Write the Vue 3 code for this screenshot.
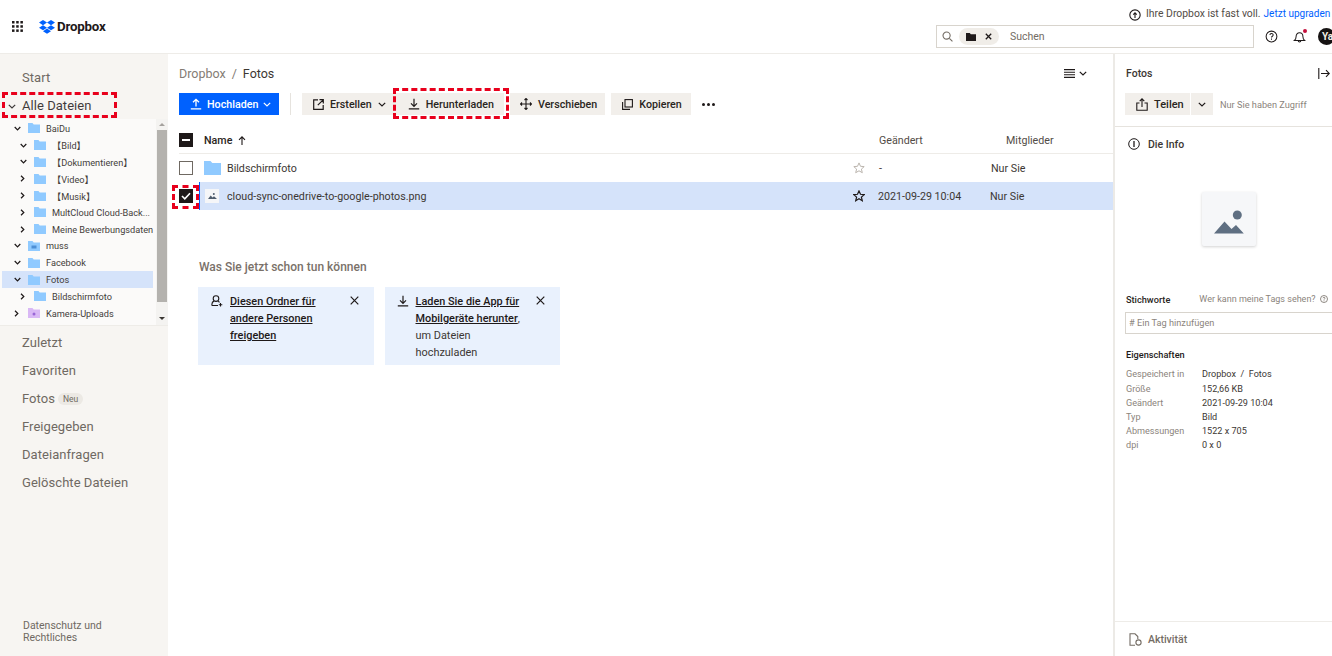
<script setup>
const tree = [
  { name: '【Bild】', depth: 1, open: true },
  { name: '【Dokumentieren】', depth: 1, open: true },
  { name: '【Video】', depth: 1, open: false },
  { name: '【Musik】', depth: 1, open: false },
  { name: 'MultCloud Cloud-Back...', depth: 1, open: false },
  { name: 'Meine Bewerbungsdaten', depth: 1, open: false },
  { name: 'muss', depth: 0, open: true, shared: true },
  { name: 'Facebook', depth: 0, open: true },
  { name: 'Fotos', depth: 0, open: true, active: true },
  { name: 'Bildschirmfoto', depth: 1, open: false },
  { name: 'Kamera-Uploads', depth: 0, open: false, camera: true },
  { name: '', depth: 0, open: false },
]
const nav = ['Zuletzt', 'Favoriten', 'Fotos', 'Freigegeben', 'Dateianfragen', 'Gelöschte Dateien']
const props = [
  ['Größe', '152,66 KB'],
  ['Geändert', '2021-09-29 10:04'],
  ['Typ', 'Bild'],
  ['Abmessungen', '1522 x 705'],
  ['dpi', '0 x 0'],
]
</script>

<template>
  <div class="app">
    <header class="top">
      <div class="brand">
        <svg class="grid" width="11" height="11" viewBox="0 0 11 11" fill="#1e1919">
          <template v-for="y in [0, 4.2, 8.4]" :key="y">
            <rect v-for="x in [0, 4.2, 8.4]" :key="x" :x="x" :y="y" width="2.5" height="2.5" />
          </template>
        </svg>
        <svg class="logo" width="16" height="14" viewBox="0 0 32 28" fill="#0061fe">
          <path d="M8 0 0 5.2l8 5.1 8-5.1zM24 0l-8 5.2 8 5.1 8-5.1zM0 15.5l8 5.1 8-5.1-8-5.2zM24 10.3l-8 5.2 8 5.1 8-5.1zM8 22.3l8 5.2 8-5.2-8-5.1z" />
        </svg>
        <span class="wordmark">Dropbox</span>
      </div>
      <div class="top-right">
        <div class="notice">
          <svg width="12" height="12" viewBox="0 0 13 13" fill="none" stroke="#1e1919" stroke-width="1.2">
            <circle cx="6.5" cy="6.5" r="5.6" />
            <path d="M6.5 9.7V4.2M4.6 6l1.9-1.9L8.4 6" />
          </svg>
          <span class="notice-text">Ihre Dropbox ist fast voll.</span>
          <span class="upgrade">Jetzt upgraden</span>
        </div>
        <div class="tools">
          <div class="search">
            <svg width="11" height="11" viewBox="0 0 12 12" fill="none" stroke="#736c64" stroke-width="1.2">
              <circle cx="5" cy="5" r="3.9" />
              <path d="m8 8 3.4 3.4" />
            </svg>
            <div class="chip">
              <svg width="10" height="8" viewBox="0 0 10 8" fill="#1e1919">
                <path d="M0 0h3.8l1 1.2H10V8H0z" />
              </svg>
              <svg width="7" height="7" viewBox="0 0 7 7" stroke="#1e1919" stroke-width="1.3">
                <path d="m.8.8 5.4 5.4M6.2.8.8 6.2" />
              </svg>
            </div>
            <span class="placeholder">Suchen</span>
          </div>
          <svg class="tool" width="13" height="13" viewBox="0 0 14 14" fill="none" stroke="#1e1919" stroke-width="1.1">
            <circle cx="7" cy="7" r="5.8" />
            <path d="M5.3 5.5c0-2.2 3.5-2.2 3.5-.1 0 1.4-1.8 1.3-1.8 2.8M7 9.2v1.2" />
          </svg>
          <span class="bell">
            <svg width="13" height="14" viewBox="0 0 14 14" fill="none" stroke="#1e1919" stroke-width="1.1">
              <path d="M1.5 10.8c1.3-1 1.8-2 1.8-4 0-2.600 1.500-4.300 3.700-4.300s3.700 1.700 3.700 4.300c0 2 .5 3 1.800 4zM5.600 11c0 1.800 2.800 1.800 2.800 0" />
            </svg>
            <i class="dot"></i>
          </span>
          <span class="avatar">Ya</span>
        </div>
      </div>
    </header>

    <div class="body">
      <aside class="side">
        <div class="nav-item start">Start</div>
        <div class="nav-item all">
          <svg class="all-chev" width="8" height="5" viewBox="0 0 8 5" fill="none" stroke="#1e1919" stroke-width="1.2">
            <path d="m.8.8 3.2 3.2L7.200.8" />
          </svg>
          Alle Dateien
        </div>
        <div class="tree">
          <div class="tree-list">
            <div class="tree-row d0">
              <svg class="chev" width="7" height="5" viewBox="0 0 8 5" fill="none" stroke="#1e1919" stroke-width="1.4">
                <path d="m.8.8 3.2 3.2L7.200.8" />
              </svg>
              <svg class="folder" width="12" height="10" viewBox="0 0 12 10" fill="#90caff">
                <path d="M0 0h4.500l1.200 1.400H12V10H0z" />
              </svg>
              <span>BaiDu</span>
            </div>
            <div
              v-for="row in tree"
              :key="row.name"
              class="tree-row"
              :class="[row.depth ? 'd1' : 'd0', { active: row.active }]"
            >
              <svg v-if="row.open" class="chev" width="7" height="5" viewBox="0 0 8 5" fill="none" stroke="#1e1919" stroke-width="1.4">
                <path d="m.8.8 3.2 3.2L7.200.8" />
              </svg>
              <svg v-else class="chev" width="5" height="7" viewBox="0 0 5 8" fill="none" stroke="#1e1919" stroke-width="1.4">
                <path d="m.8.8 3.200 3.200L.8 7.200" />
              </svg>
              <svg class="folder" width="12" height="10" viewBox="0 0 12 10" :fill="row.camera ? '#d9b8f5' : '#90caff'">
                <path d="M0 0h4.500l1.200 1.400H12V10H0z" />
                <rect v-if="row.shared" x="3.500" y="4.500" width="5" height="3" fill="#4d8fd6" />
                <circle v-if="row.camera" cx="6" cy="6" r="1.500" fill="#9a66d6" />
              </svg>
              <span>{{ row.name }}</span>
            </div>
          </div>
          <div class="scroll">
            <i class="arrow up"></i>
            <div class="thumb"></div>
            <i class="arrow down"></i>
          </div>
        </div>
        <nav class="nav">
          <div v-for="n in nav" :key="n" class="nav-item">
            {{ n }}<span v-if="n === 'Fotos'" class="new">Neu</span>
          </div>
        </nav>
        <div class="legal">Datenschutz und<br />Rechtliches</div>
      </aside>

      <main class="main">
        <div class="crumb-row">
          <div class="crumb"><span class="muted">Dropbox</span><span class="muted sl">/</span><span>Fotos</span></div>
          <div class="view">
            <svg width="11" height="9" viewBox="0 0 11 9" stroke="#1e1919" stroke-width="1.1">
              <path d="M0 .6h11M0 3.200h11M0 5.800h11M0 8.400h11" />
            </svg>
            <svg width="8" height="5" viewBox="0 0 8 5" fill="none" stroke="#1e1919" stroke-width="1.2">
              <path d="m.8.8 3.200 3.200L7.200.8" />
            </svg>
          </div>
        </div>

        <div class="actions">
          <button class="btn primary">
            <svg width="12" height="12" viewBox="0 0 12 12" fill="none" stroke="#fff" stroke-width="1.300">
              <path d="M6 8.500V1.500M3 4.300l3-3 3 3M.8 10.800h10.400" />
            </svg>
            Hochladen
            <svg width="8" height="5" viewBox="0 0 8 5" fill="none" stroke="#fff" stroke-width="1.200">
              <path d="m.8.8 3.200 3.200L7.200.8" />
            </svg>
          </button>
          <span class="vr"></span>
          <div class="joined">
            <button class="btn">
              <svg width="11" height="11" viewBox="0 0 11 11" fill="none" stroke="#1e1919" stroke-width="1.200">
                <path d="M5 .8H.7v9.500h9.500V6M6.500.7h3.800v3.800M10.200.8 4.800 6.200" />
              </svg>
              Erstellen
              <svg width="8" height="5" viewBox="0 0 8 5" fill="none" stroke="#1e1919" stroke-width="1.200">
                <path d="m.8.8 3.200 3.200L7.200.8" />
              </svg>
            </button>
            <button class="btn download">
              <svg width="12" height="12" viewBox="0 0 12 12" fill="none" stroke="#1e1919" stroke-width="1.200">
                <path d="M6 .8v7.400M3 5.300l3 3 3-3M.8 10.800h10.400" />
              </svg>
              Herunterladen
            </button>
          </div>
          <button class="btn move">
            <svg width="12" height="12" viewBox="0 0 12 12" fill="none" stroke="#1e1919" stroke-width="1.100">
              <path d="M6 .5v11M.5 6h11M4.500 2 6 .5 7.500 2M4.500 10 6 11.500 7.500 10M2 4.500.5 6 2 7.500M10 4.500 11.500 6 10 7.500" />
            </svg>
            Verschieben
          </button>
          <button class="btn copy">
            <svg width="11" height="11" viewBox="0 0 11 11" fill="none" stroke="#1e1919" stroke-width="1.100">
              <rect x="3" y=".6" width="7.400" height="7.400" />
              <path d="M.6 3v7.400H8" />
            </svg>
            Kopieren
          </button>
          <span class="more"><i></i><i></i><i></i></span>
        </div>

        <div class="thead">
          <span class="box indet"><i></i></span>
          <span class="th-name">Name
            <svg width="8" height="9" viewBox="0 0 8 9" fill="none" stroke="#1e1919" stroke-width="1.100">
              <path d="M4 9V1M1 3.800l3-3 3 3" />
            </svg>
          </span>
          <span class="th-mod">Geändert</span>
          <span class="th-mem">Mitglieder</span>
        </div>

        <div class="row">
          <span class="box"></span>
          <svg class="row-folder" width="17" height="14" viewBox="0 0 17 14" fill="#90caff">
            <path d="M0 0h6.500l1.800 2H17v12H0z" />
          </svg>
          <span class="fname">Bildschirmfoto</span>
          <svg class="star" width="12" height="12" viewBox="0 0 12 12" fill="none" stroke="#bbb5ae" stroke-width="1">
            <path d="m6 .9 1.500 3.400 3.700.3-2.800 2.500.9 3.600L6 8.800l-3.300 1.900.9-3.600L.8 4.600l3.700-.3z" />
          </svg>
          <span class="mod">-</span>
          <span class="mem">Nur Sie</span>
        </div>
        <div class="row selected">
          <span class="box checked">
            <svg width="10" height="8" viewBox="0 0 10 8" fill="none" stroke="#fff" stroke-width="1.600">
              <path d="m1 4 2.800 2.800L9 1.200" />
            </svg>
          </span>
          <span class="thumb-file">
            <svg width="9" height="6" viewBox="0 0 9 6" fill="#4f5d6e">
              <circle cx="5.800" cy="1" r="1" />
              <path d="M0 6 2.700 2.500 4.500 4.500 6 3.300 9 6z" />
            </svg>
          </span>
          <span class="fname">cloud-sync-onedrive-to-google-photos.png</span>
          <svg class="star" width="12" height="12" viewBox="0 0 12 12" fill="none" stroke="#1e1919" stroke-width="1.200">
            <path d="m6 .9 1.500 3.400 3.700.3-2.800 2.500.9 3.600L6 8.800l-3.300 1.900.9-3.600L.8 4.600l3.700-.3z" />
          </svg>
          <span class="mod">2021-09-29 10:04</span>
          <span class="mem">Nur Sie</span>
        </div>

        <section class="tips">
          <h2>Was Sie jetzt schon tun können</h2>
          <div class="cards">
            <div class="card">
              <svg width="12" height="12" viewBox="0 0 12 12" fill="none" stroke="#1e1919" stroke-width="1.100">
                <circle cx="5" cy="3.600" r="2.800" />
                <path d="M1 10.600c-.4-2.800 1-4.200 2-4.500M7 6.100c.8.300 1.200.8 1.400 1.400M1 10.500h6M9.500 8v3.500M7.800 9.800h3.500" />
              </svg>
              <div class="card-text"><u>Diesen Ordner für andere Personen freigeben</u></div>
              <svg class="x" width="9" height="9" viewBox="0 0 9 9" stroke="#1e1919" stroke-width="1.200">
                <path d="m.7.7 7.600 7.600M8.300.7.700 8.300" />
              </svg>
            </div>
            <div class="card">
              <svg width="12" height="12" viewBox="0 0 12 12" fill="none" stroke="#1e1919" stroke-width="1.200">
                <path d="M6 .8v7.400M3 5.300l3 3 3-3M.8 10.800h10.400" />
              </svg>
              <div class="card-text"><u>Laden Sie die App für Mobilgeräte herunter</u>, um Dateien hochzuladen</div>
              <svg class="x" width="9" height="9" viewBox="0 0 9 9" stroke="#1e1919" stroke-width="1.200">
                <path d="m.7.7 7.600 7.600M8.300.7.700 8.300" />
              </svg>
            </div>
          </div>
        </section>
      </main>

      <aside class="panel">
        <div class="p-head">
          <span>Fotos</span>
          <svg width="12" height="11" viewBox="0 0 12 11" fill="none" stroke="#1e1919" stroke-width="1.100">
            <path d="M.8 0v11M3 5.500h8.300M8 2.200l3.300 3.300L8 8.800" />
          </svg>
        </div>
        <div class="share">
          <button class="btn share-btn">
            <svg width="12" height="13" viewBox="0 0 12 13" fill="none" stroke="#1e1919" stroke-width="1.100">
              <path d="M3.500 5H.8v7.300h10.400V5H8.500M6 9V1M3.700 3.200 6 .9l2.300 2.300" />
            </svg>
            Teilen
          </button>
          <button class="btn share-chev">
            <svg width="8" height="5" viewBox="0 0 8 5" fill="none" stroke="#1e1919" stroke-width="1.200">
              <path d="m.8.8 3.200 3.200L7.200.8" />
            </svg>
          </button>
          <span class="access">Nur Sie haben Zugriff</span>
        </div>
        <div class="info">
          <div class="info-title">
            <svg width="12" height="12" viewBox="0 0 12 12" fill="none" stroke="#1e1919" stroke-width="1">
              <circle cx="6" cy="6" r="5.300" />
              <path d="M6 3v6" stroke-width="1.300" />
            </svg>
            Die Info
          </div>
          <div class="preview">
            <svg width="30" height="24" viewBox="0 0 30 24" fill="#5f6f82">
              <circle cx="23.300" cy="5" r="4.500" />
              <path d="M0 23.500 10.500 11.500l7 7.500 4.500-4 7.800 8.500z" />
            </svg>
          </div>
          <div class="tags-head">
            <b>Stichworte</b>
            <span class="who">Wer kann meine Tags sehen?
              <svg width="8" height="8" viewBox="0 0 8 8" fill="none" stroke="#736c64" stroke-width=".8">
                <circle cx="4" cy="4" r="3.500" />
                <path d="M3 3.200c0-1.200 2-1.200 2 0 0 .7-1 .7-1 1.500M4 5.400v.8" />
              </svg>
            </span>
          </div>
          <div class="tag-input"># Ein Tag hinzufügen</div>
          <div class="props-title">Eigenschaften</div>
          <div class="prop first">
            <span class="k">Gespeichert in</span>
            <span class="v">Dropbox&nbsp;&nbsp;/&nbsp;&nbsp;Fotos</span>
          </div>
          <div v-for="p in props" :key="p[0]" class="prop">
            <span class="k">{{ p[0] }}</span>
            <span class="v">{{ p[1] }}</span>
          </div>
        </div>
        <div class="activity">
          <svg width="13" height="13" viewBox="0 0 13 13" fill="none" stroke="#736c64" stroke-width="1.100">
            <path d="M6 12.300H1V.8h5l2.800 2.800V6" />
            <circle cx="9.500" cy="9.500" r="2.600" />
          </svg>
          Aktivität
        </div>
      </aside>
    </div>

    <i class="mark m-all"></i>
    <i class="mark m-down"></i>
    <i class="mark m-check"></i>
  </div>
</template>

<style scoped>
.app {
  position: relative;
  width: 1332px;
  height: 656px;
  overflow: hidden;
  background: #fff;
  display: flex;
  flex-direction: column;
  font-family: Roboto, "Liberation Sans", "Noto Sans CJK SC", sans-serif;
  color: #1e1919;
  font-size: 11px;
}
.top {
  height: 54px;
  flex: none;
  box-sizing: border-box;
  border-bottom: 1px solid #eeece8;
  display: flex;
  justify-content: space-between;
}
.brand {
  display: flex;
  align-items: center;
  padding: 0 0 0 12px;
}
.logo {
  margin-left: 16px;
}
.wordmark {
  margin-left: 2px;
  font-size: 13.300px;
  font-weight: 700;
  letter-spacing: -0.2px;
}
.top-right {
  width: 396px;
  flex: none;
}
.notice {
  height: 26px;
  margin-bottom: -1px;
  padding-left: 193px;
  display: flex;
  align-items: center;
  font-size: 10.400px;
  color: #524c46;
  white-space: nowrap;
}
.notice svg {
  flex: none;
  margin-top: 3px;
}
.notice-text {
  margin-left: 5px;
}
.upgrade {
  margin-left: 3px;
  font-size: 10px;
  color: #0061fe;
}
.tools {
  display: flex;
  align-items: center;
}
.search {
  width: 318px;
  height: 23px;
  flex: none;
  box-sizing: border-box;
  border: 1px solid #d8d4cd;
  display: flex;
  align-items: center;
  padding-left: 5px;
}
.chip {
  margin-left: 6px;
  width: 40px;
  height: 17px;
  border-radius: 9px;
  background: #f0ede8;
  display: flex;
  align-items: center;
  gap: 9px;
  padding-left: 7px;
  box-sizing: border-box;
}
.placeholder {
  margin-left: 11px;
  color: #736c64;
  font-size: 10.500px;
}
.tool {
  flex: none;
  margin-left: 11px;
}
.bell {
  position: relative;
  flex: none;
  margin-left: 15px;
  display: flex;
}
.dot {
  position: absolute;
  right: -1px;
  top: -1px;
  width: 4px;
  height: 4px;
  border-radius: 50%;
  background: #c4103c;
}
.avatar {
  margin-left: 12px;
  width: 17px;
  height: 17px;
  flex: none;
  border-radius: 50%;
  background: #161313;
  color: #f5efe3;
  font-size: 10px;
  font-weight: 700;
  line-height: 17px;
  padding-left: 4px;
  box-sizing: border-box;
}
.body {
  flex: 1;
  min-height: 0;
  display: flex;
}
.side {
  width: 168px;
  flex: none;
  background: #f7f5f2;
  display: flex;
  flex-direction: column;
  padding-top: 10px;
  box-sizing: border-box;
}
.nav-item {
  height: 28px;
  line-height: 28px;
  padding-left: 22px;
  font-size: 13px;
  color: #6f6962;
  letter-spacing: 0.05px;
}
.all {
  position: relative;
  color: #1e1919;
  opacity: 0.85;
  height: 28px;
}
.all-chev {
  position: absolute;
  left: 8px;
  top: 12px;
}
.tree {
  height: 207px;
  margin-top: -1px;
  background: #fbfaf9;
  border-bottom: 1px solid #eeece8;
  display: flex;
  box-sizing: border-box;
  overflow: hidden;
}
.tree-list {
  width: 153px;
  margin-right: 3px;
  flex: none;
  padding: 1px 0 0 2px;
  box-sizing: border-box;
  overflow: hidden;
}
.tree-row {
  height: 16.800px;
  display: flex;
  align-items: center;
  font-size: 9.200px;
  color: #44403b;
  white-space: nowrap;
  position: relative;
}
.tree-row.active {
  background: #d5e3fa;
}
.tree-row.d0 {
  padding-left: 26px;
}
.tree-row.d1 {
  padding-left: 32px;
}
.chev {
  position: absolute;
  left: 12px;
}
.d1 .chev {
  left: 18px;
}
.folder {
  flex: none;
  margin-right: 6px;
}
.scroll {
  width: 12px;
  position: relative;
  background: #f4f3f1;
  flex: none;
}
.thumb {
  position: absolute;
  left: 1px;
  right: 1px;
  top: 11px;
  bottom: 23px;
  background: #b4b2ae;
}
.arrow {
  position: absolute;
  left: 3px;
  width: 0;
  height: 0;
  border-left: 3px solid transparent;
  border-right: 3px solid transparent;
}
.up {
  top: 4px;
  border-bottom: 3px solid #a5a29e;
}
.down {
  bottom: 5px;
  border-top: 3px solid #3a3733;
}
.nav {
  margin-top: 3px;
}
.new {
  display: inline-block;
  margin-left: 3px;
  padding: 0 5px;
  height: 12px;
  line-height: 12px;
  border-radius: 6px;
  background: #ece9e4;
  font-size: 8.500px;
  letter-spacing: 0;
  vertical-align: 1px;
}
.legal {
  margin-top: auto;
  padding: 0 0 12px 23px;
  color: #6f6962;
  font-size: 10.500px;
  line-height: 12px;
}
.main {
  width: 945px;
  flex: none;
  padding-top: 10px;
  box-sizing: border-box;
}
.crumb-row {
  height: 18px;
  display: flex;
  justify-content: space-between;
  align-items: center;
  padding: 0 26px 0 11px;
  font-size: 12.500px;
}
.crumb {
  color: #3c3733;
}
.muted {
  color: #847c74;
}
.sl {
  margin: 0 6px;
}
.view {
  display: flex;
  align-items: center;
  gap: 4px;
}
.actions {
  margin-top: 11px;
  padding-left: 11px;
  display: flex;
  align-items: center;
  gap: 6px;
}
.joined {
  display: flex;
}
.btn {
  height: 22px;
  flex: none;
  border: 0;
  padding: 0 8px 0 11px;
  background: #f2efeb;
  font: 500 10.700px Roboto, "Liberation Sans", sans-serif;
  color: #2a2622;
  display: flex;
  align-items: center;
  gap: 6px;
}
.download {
  padding: 0 10px 0 14px;
}
.move {
  padding-left: 10px;
}
.copy {
  padding-right: 9px;
}
.primary {
  background: #0061fe;
  color: #fff;
  width: 100px;
  gap: 5px;
  padding: 0 6px 0 11px;
  margin-right: 5px;
}
.vr {
  width: 1px;
  height: 22px;
  background: #e6e3de;
  margin-right: 5px;
}
.more {
  display: flex;
  gap: 2px;
  margin-left: 5px;
}
.more i {
  width: 3px;
  height: 3px;
  border-radius: 50%;
  background: #1e1919;
}
.thead {
  position: relative;
  height: 26px;
  margin: 12px 0 0 11px;
  border-bottom: 1px solid #eeece8;
  display: flex;
  align-items: center;
  font-size: 10.700px;
  color: #524c46;
}
.box {
  width: 14px;
  height: 14px;
  box-sizing: border-box;
  border: 1px solid #6f6962;
  flex: none;
  display: flex;
  align-items: center;
  justify-content: center;
}
.indet,
.checked {
  background: #1e1919;
  border-color: #1e1919;
}
.indet i {
  width: 8px;
  height: 2px;
  background: #fff;
}
.th-name {
  margin-left: 11px;
  font-weight: 500;
  color: #2a2622;
  display: flex;
  align-items: center;
  gap: 6px;
}
.th-mod {
  position: absolute;
  left: 700px;
}
.th-mem {
  position: absolute;
  left: 827px;
}
.row {
  position: relative;
  height: 28px;
  margin-left: 11px;
  display: flex;
  align-items: center;
  font-size: 10.700px;
  color: #3c3733;
}
.row.selected {
  margin-left: 31px;
  background: #d5e3fa;
  border-left: 1px solid #0061fe;
  box-sizing: border-box;
}
.selected .box {
  position: absolute;
  left: -21px;
  top: 7px;
}
.row-folder {
  margin-left: 11px;
}
.thumb-file {
  width: 14px;
  height: 14px;
  margin-left: 5px;
  background: #f5f6f8;
  display: flex;
  align-items: center;
  justify-content: center;
}
.fname {
  margin-left: 6px;
}
.selected .fname {
  margin-left: 8px;
}
.star {
  position: absolute;
  left: 674px;
}
.selected .star {
  left: 653px;
}
.mod {
  position: absolute;
  left: 700px;
}
.selected .mod {
  left: 678px;
}
.mem {
  position: absolute;
  left: 812px;
}
.selected .mem {
  left: 790px;
}
.tips {
  margin: 50px 0 0 30px;
}
.tips h2 {
  margin: 0 0 13px;
  font-size: 12px;
  font-weight: 500;
  color: #7a7169;
  line-height: 14px;
  padding-left: 1px;
}
.cards {
  display: flex;
  gap: 11px;
}
.card {
  width: 175.500px;
  height: 78px;
  box-sizing: border-box;
  background: #e9f1fd;
  padding: 6px 15px 5px 13px;
  display: flex;
  align-items: flex-start;
  gap: 7px;
  font-size: 10.900px;
  line-height: 17px;
  color: #3c3733;
}
.card + .card {
  padding-left: 12px;
}
.card > svg {
  flex: none;
  margin-top: 2px;
}
.card-text {
  flex: 1;
  min-width: 0;
}
.card-text u {
  font-weight: 500;
  color: #1e1919;
}
.card:first-child .card-text {
  padding-right: 8px;
}
.x {
  margin-top: 3px !important;
}
.panel {
  flex: 1;
  min-width: 0;
  box-sizing: border-box;
  border-left: 2px solid #eceae6;
  display: flex;
  flex-direction: column;
}
.p-head {
  height: 18px;
  margin-top: 10px;
  padding: 0 2px 0 11px;
  display: flex;
  justify-content: space-between;
  align-items: center;
  font-size: 10.500px;
  font-weight: 500;
  color: #3c3733;
}
.share {
  margin-top: 11px;
  padding-left: 10px;
  padding-bottom: 11px;
  border-bottom: 1px solid #e6e3de;
  display: flex;
  align-items: center;
  gap: 1px;
}
.share-btn {
  width: 65px;
  padding: 0 0 0 11px;
  font-size: 11px;
}
.share-chev {
  width: 22px;
  padding: 0;
  justify-content: center;
}
.access {
  margin-left: 6px;
  font-size: 9.200px;
  color: #8b847c;
  white-space: nowrap;
}
.info {
  flex: 1;
  padding: 10px 0 0 11px;
  min-height: 0;
}
.info-title {
  height: 14px;
  display: flex;
  align-items: center;
  gap: 8px;
  font-size: 10.500px;
  font-weight: 500;
  color: #3c3733;
  padding-left: 2px;
}
.preview {
  width: 54px;
  height: 54px;
  margin: 41px 0 0 76px;
  background: #f6f7f9;
  border-radius: 2px;
  box-shadow: 0 1px 3px rgba(0, 0, 0, 0.18);
  display: flex;
  align-items: center;
  justify-content: center;
}
.preview svg {
  margin-top: 6px;
}
.tags-head {
  margin-top: 46px;
  height: 14px;
  display: flex;
  align-items: center;
  font-size: 9.200px;
  white-space: nowrap;
}
.tags-head b {
  font-weight: 500;
  color: #2a2622;
}
.who {
  margin-left: 29px;
  color: #8b847c;
  font-size: 9px;
  display: flex;
  align-items: center;
  gap: 4px;
}
.tag-input {
  margin: 6px -4px 0 -1px;
  height: 22px;
  box-sizing: border-box;
  border: 1px solid #d8d4cd;
  padding-left: 3px;
  line-height: 20px;
  font-size: 9.200px;
  color: #8b847c;
  white-space: nowrap;
}
.props-title {
  margin-top: 14px;
  font-size: 9.200px;
  font-weight: 500;
  line-height: 14px;
}
.prop {
  height: 14px;
  display: flex;
  align-items: center;
  font-size: 9.100px;
  color: #3c3733;
}
.first {
  margin-top: 3px;
  height: 17px;
}
.k {
  width: 76px;
  flex: none;
  color: #8b847c;
}
.activity {
  height: 35px;
  flex: none;
  box-sizing: border-box;
  padding: 0 0 0 14px;
  border-top: 1px solid #eeece8;
  display: flex;
  align-items: center;
  gap: 6px;
  font-size: 10.500px;
  font-weight: 500;
  color: #736c64;
}
.mark {
  position: absolute;
  box-sizing: border-box;
  border: 3px dashed #e8001c;
}
.m-all {
  left: 2px;
  top: 92px;
  width: 115px;
  height: 26px;
}
.m-down {
  left: 393px;
  top: 88px;
  width: 116px;
  height: 31px;
}
.m-check {
  left: 172px;
  top: 185px;
  width: 27px;
  height: 24px;
}
</style>
